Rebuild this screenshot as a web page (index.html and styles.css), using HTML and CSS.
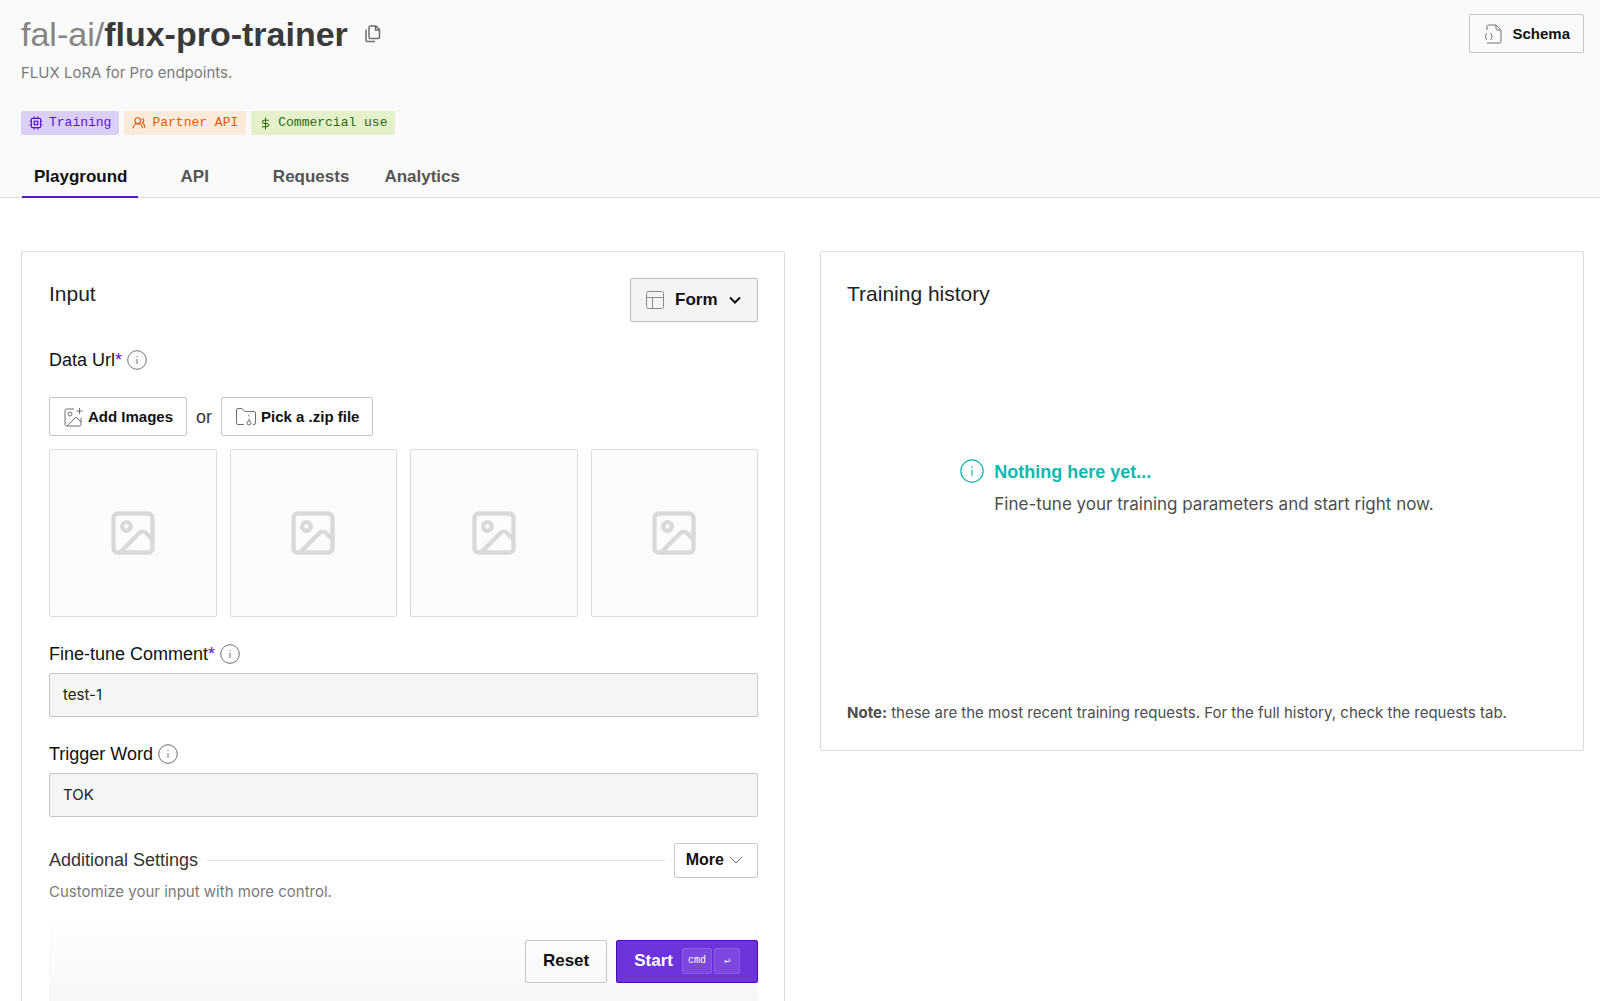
FILE: index.html
```html
<!DOCTYPE html>
<html lang="en">
<head>
<meta charset="utf-8">
<meta name="viewport" content="width=device-width, initial-scale=1">
<title>fal-ai/flux-pro-trainer</title>
<link rel="stylesheet" href="styles.css">
</head>
<body>
<svg class="sprite" aria-hidden="true">
  <symbol id="info" viewBox="0 0 20 20"><circle cx="10" cy="10" r="9.3"/><path d="M10 9v5M10 6v1.2"/></symbol>
  <symbol id="picture" viewBox="0 0 24 24"><rect x="3" y="3" width="18" height="18" rx="2"/><circle cx="9" cy="9" r="2"/><path d="m21 15-3.086-3.086a2 2 0 0 0-2.828 0L6 21"/></symbol>
</svg>

<header class="header">
  <div class="header-top">
    <div class="title-row">
      <h1 class="title"><span class="owner">fal-ai/</span>flux-pro-trainer</h1>
      <button class="copy" type="button" aria-label="Copy">
        <svg class="icon" width="16" height="18" viewBox="0 0 16 18"><path d="M5.500 1h5.500l3.500 3.500v7.500a1.500 1.500 0 0 1-1.500 1.500H5.500A1.500 1.500 0 0 1 4 12V2.500A1.500 1.500 0 0 1 5.500 1zM10.500 1v4h4M1 4.500v10.500a1.500 1.500 0 0 0 1.500 1.500h7.500"/></svg>
      </button>
    </div>
    <button class="btn btn-schema" type="button">
      <svg class="icon" width="18" height="20" viewBox="0 0 18 20"><path d="M3 6V2.500A1.500 1.500 0 0 1 4.500 1h7.500l5 5v11.500a1.500 1.500 0 0 1-1.500 1.500H3M12 1v3.500A1.500 1.500 0 0 0 13.500 6H17M3 9.500q-1 0-1 1v.8q0 1-1 1.200q1 .2 1 1.200v.8q0 1 1 1M6.500 9.500q1 0 1 1v.8q0 1 1 1.200q-1 .2-1 1.200v.8q0 1-1 1"/></svg>
      Schema
    </button>
  </div>
  <p class="subtitle">FLUX LoRA for Pro endpoints.</p>
  <div class="badges">
    <span class="badge badge-purple">
      <svg width="14" height="14" viewBox="0 0 24 24"><rect x="4" y="4" width="16" height="16" rx="2"/><rect x="9" y="9" width="6" height="6"/><path d="M9 1v3M15 1v3M9 20v3M15 20v3M1 9h3M1 15h3M20 9h3M20 15h3"/></svg>
      Training</span>
    <span class="badge badge-orange">
      <svg width="14" height="14" viewBox="0 0 24 24"><circle cx="10" cy="8" r="5"/><path d="M2 21a8 8 0 0 1 16 0M22 20c0-3.370-2-6.500-4-8a5 5 0 0 0-.450-8.300"/></svg>
      Partner API</span>
    <span class="badge badge-green">
      <svg width="13" height="13" viewBox="0 0 24 24"><path d="M12 1v22M18 6H9.500a3 3 0 0 0 0 6h5a3 3 0 0 1 0 6H5"/></svg>
      Commercial use</span>
  </div>
  <nav class="tabs">
    <a class="tab tab-active" href="#playground" aria-current="page">Playground</a>
    <a class="tab tab-short" href="#api">API</a>
    <a class="tab" href="#requests">Requests</a>
    <a class="tab" href="#analytics">Analytics</a>
  </nav>
</header>

<main class="columns">
  <form class="card card-input">
    <div class="card-head">
      <h2 class="heading">Input</h2>
      <label class="mode">
        <svg class="mode-icon icon" width="18" height="18" viewBox="0 0 18 18"><rect x=".5" y=".5" width="17" height="17" rx="2"/><path d="M.5 6.500h17M6.500 6.500v11"/></svg>
        <select class="mode-select" aria-label="Input mode"><option>Form</option></select>
        <svg class="mode-chevron" width="12" height="8" viewBox="0 0 12 8"><path d="m1 1.500 5 5 5-5"/></svg>
      </label>
    </div>

    <div class="label-row">
      <span>Data Url<span class="star">*</span></span>
      <svg class="icon" width="20" height="20"><use href="#info"/></svg>
    </div>
    <div class="pickers">
      <button class="btn" type="button">
        <svg class="icon" width="19" height="20" viewBox="0 0 19 20"><path d="M10 2H2.500A1.500 1.500 0 0 0 1 3.500v14A1.500 1.500 0 0 0 2.500 19h13a1.500 1.500 0 0 0 1.500-1.500V11M15.500 1v6M12.500 4h6M3 19l8-8q1-1 2 0l4 4"/><circle cx="6" cy="7" r="2"/></svg>
        Add Images
      </button>
      <span class="or">or</span>
      <button class="btn" type="button">
        <svg class="icon" width="20" height="18" viewBox="0 0 20 18"><path d="M8 16.500H2A1.500 1.500 0 0 1 .5 15V2A1.500 1.500 0 0 1 2 .5h4l3 3h9A1.500 1.500 0 0 1 19.500 5v10a1.500 1.500 0 0 1-1.500 1.500h-1M13 6.500v2M13 10.500v2.500"/><circle cx="13" cy="15" r="2"/></svg>
        Pick a .zip file
      </button>
    </div>
    <div class="tiles">
      <div class="tile"><svg width="52" height="52"><use href="#picture"/></svg></div>
      <div class="tile"><svg width="52" height="52"><use href="#picture"/></svg></div>
      <div class="tile"><svg width="52" height="52"><use href="#picture"/></svg></div>
      <div class="tile"><svg width="52" height="52"><use href="#picture"/></svg></div>
    </div>

    <div class="field">
      <div class="label-row">
        <label for="comment">Fine-tune Comment<span class="star">*</span></label>
        <svg class="icon" width="20" height="20"><use href="#info"/></svg>
      </div>
      <input class="text" id="comment" type="text" value="test-1">
    </div>
    <div class="field">
      <div class="label-row">
        <label for="trigger">Trigger Word</label>
        <svg class="icon" width="20" height="20"><use href="#info"/></svg>
      </div>
      <input class="text" id="trigger" type="text" value="TOK">
    </div>

    <div class="more-row">
      <h3 class="more-title">Additional Settings</h3>
      <span class="rule"></span>
      <button class="btn btn-more" type="button">More
        <svg class="icon" width="14" height="8" viewBox="0 0 14 8"><path d="m1 1 6 6 6-6"/></svg>
      </button>
    </div>
    <p class="hint">Customize your input with more control.</p>

    <div class="actions">
      <button class="btn btn-large" type="reset">Reset</button>
      <button class="btn btn-large btn-start" type="submit">Start
        <span class="keys"><kbd class="key">cmd</kbd><kbd class="key">↵</kbd></span>
      </button>
    </div>
  </form>

  <section class="card card-history">
    <h2 class="heading">Training history</h2>
    <div class="empty">
      <svg class="empty-icon" width="24" height="24"><use href="#info"/></svg>
      <div>
        <h3 class="empty-title">Nothing here yet...</h3>
        <p class="empty-text">Fine-tune your training parameters and start right now.</p>
      </div>
    </div>
    <p class="note"><strong>Note:</strong> these are the most recent training requests. For the full history, check the requests tab.</p>
  </section>
</main>
</body>
</html>
```

FILE: styles.css
```css
:root {
  --display: "Liberation Sans", Arial, sans-serif;
  --body: Inter, sans-serif;
  --mono: "Liberation Mono", monospace;
  --line: #dcdcdc;
  --line-strong: #c6c6c6;
  --purple: #5714d1;
}

* { box-sizing: border-box; }

body {
  margin: 0;
  min-height: 100vh;
  display: flex;
  flex-direction: column;
  background: #fff;
  color: #111;
  font: 15px/24px var(--body);
}

h1, h2, h3, p { margin: 0; }
button, input, select { font: inherit; color: inherit; }
svg { flex: none; fill: none; stroke: currentColor; }
.sprite { position: absolute; width: 0; height: 0; }
.icon { color: #6e6e6e; }

/* Header */
.header {
  padding: 14px 16px 0 21px;
  background: #fafafa;
  border-bottom: 1px solid var(--line);
}
.header-top { display: flex; justify-content: space-between; align-items: flex-start; }
.title-row { display: flex; align-items: center; gap: 17px; }
.title {
  font: 700 34px/40px var(--display);
  color: #3a3a3a;
}
.owner { font-weight: 400; color: #858585; }
.copy {
  display: flex;
  padding: 0;
  border: 0;
  background: none;
  cursor: pointer;
}
.copy svg { stroke-width: 1.5; }
.subtitle { margin-top: 7px; color: #7a7a7a; }
.badges { display: flex; gap: 5px; margin-top: 26px; }
.badge {
  display: flex;
  align-items: center;
  gap: 6px;
  height: 24px;
  padding: 0 8px;
  border-radius: 2px;
  font: 13px/24px var(--mono);
}
.badge svg { stroke-width: 2; }
.badge-purple { background: #dccff5; color: var(--purple); }
.badge-orange { background: #fcebda; color: #dd5a10; }
.badge-green { background: #e4f1ca; color: #2f6b10; }
.tabs { display: flex; gap: 11px; margin: 19px 1px 0; }
.tab {
  height: 44px;
  margin-bottom: -1px;
  padding: 0 12px;
  border-bottom: 2px solid transparent;
  font: 700 17px/46px var(--display);
  color: #555;
  text-decoration: none;
}
.tab-short { padding: 0 41px 0 32px; }
.tab-active { padding: 0 10px 0 12px; color: #111; border-color: var(--purple); }

/* Layout */
.columns {
  flex: 1;
  display: grid;
  grid-template-columns: 1fr 1fr;
  gap: 35px;
  padding: 53px 16px 0 21px;
}
.card { border: 1px solid var(--line); border-radius: 2px; padding: 26px; }
.card-input {
  display: flex;
  flex-direction: column;
  border-bottom: 0;
  border-radius: 2px 2px 0 0;
  padding: 26px 26px 0 27px;
}
.card-history {
  align-self: start;
  display: flex;
  flex-direction: column;
  min-height: 500px;
  padding-bottom: 25px;
}
.card-head { display: flex; justify-content: space-between; margin-bottom: 26px; }
.heading { font: 400 21px/32px var(--display); color: #222; }

/* Buttons */
.btn {
  display: flex;
  align-items: center;
  gap: 5px;
  height: 39px;
  padding: 0 13px 0 14px;
  border: 1px solid var(--line-strong);
  border-radius: 2px;
  background: transparent;
  font: 700 15px/20px var(--display);
  color: #111;
  white-space: nowrap;
  cursor: pointer;
}
.btn-schema { gap: 10px; }
.btn-more { height: 35px; padding: 0 14px 0 11px; font-size: 16px; }
.btn-large { height: 43px; padding: 0 17px; font-size: 17px; }
.btn-start {
  gap: 9px;
  border-color: #4a0cb5;
  background: #6d33dc;
  color: #fff;
}
.keys { display: flex; gap: 2px; }
.key {
  min-width: 26px;
  height: 26px;
  padding: 0 5px;
  border: 1px solid #8a5ce4;
  border-radius: 2px;
  background: #7d48e0;
  font: 10px/24px var(--mono);
  text-align: center;
}
.mode {
  display: flex;
  align-items: center;
  height: 44px;
  padding: 0 16px 0 15px;
  border: 1px solid #bdbdbd;
  border-radius: 2px;
  background: #f4f4f4;
}
.mode-icon { color: #8a8a8a; }
.mode-select {
  appearance: none;
  width: 66px;
  margin-right: -12px;
  padding: 0 11px;
  border: 0;
  background: none;
  font: 700 17px/24px var(--display);
}
.mode-chevron { stroke-width: 2; pointer-events: none; margin-left: 11px; }

/* Form */
.label-row {
  display: flex;
  align-items: center;
  gap: 5px;
  font: 18px/24px var(--display);
}
.star { color: var(--purple); }
.pickers { display: flex; align-items: center; gap: 9px; margin: 25px 0 13px; }
.or { font: 18px/24px var(--display); color: #333; }
.tiles { display: grid; grid-template-columns: repeat(4, 1fr); gap: 13px; }
.tile {
  display: grid;
  place-items: center;
  aspect-ratio: 1;
  border: 1px solid var(--line);
  border-radius: 2px;
  background: #fcfcfc;
  color: #d9d9d9;
}
.tile svg { stroke-width: 2; }
.field { display: flex; flex-direction: column; gap: 7px; margin-top: 25px; }
.text {
  width: 100%;
  height: 44px;
  padding: 0 13px;
  border: 1px solid var(--line-strong);
  border-radius: 2px;
  background: #f5f5f5;
  color: #222;
}
.more-row { display: flex; align-items: center; gap: 9px; margin-top: 26px; }
.more-title { font: 400 18px/24px var(--display); color: #333; }
.rule { flex: 1; height: 1px; background: var(--line); }
.hint { margin-top: 2px; color: #7a7a7a; }
.actions {
  flex: 1;
  display: flex;
  justify-content: flex-end;
  align-items: flex-start;
  gap: 9px;
  margin-top: 8px;
  padding: 28px 0 18px;
  background: linear-gradient(#fff, #f7f7f7);
}

/* History */
.empty { display: flex; gap: 10px; margin: 149px auto 0; padding-right: 10px; }
.empty-icon { color: #10b8ae; }
.empty-title { font: 700 18px/26px var(--display); color: #10b8ae; }
.empty-text { margin-top: 7px; font-size: 17px; color: #4d4d4d; }
.note { margin-top: auto; color: #4d4d4d; }
```
